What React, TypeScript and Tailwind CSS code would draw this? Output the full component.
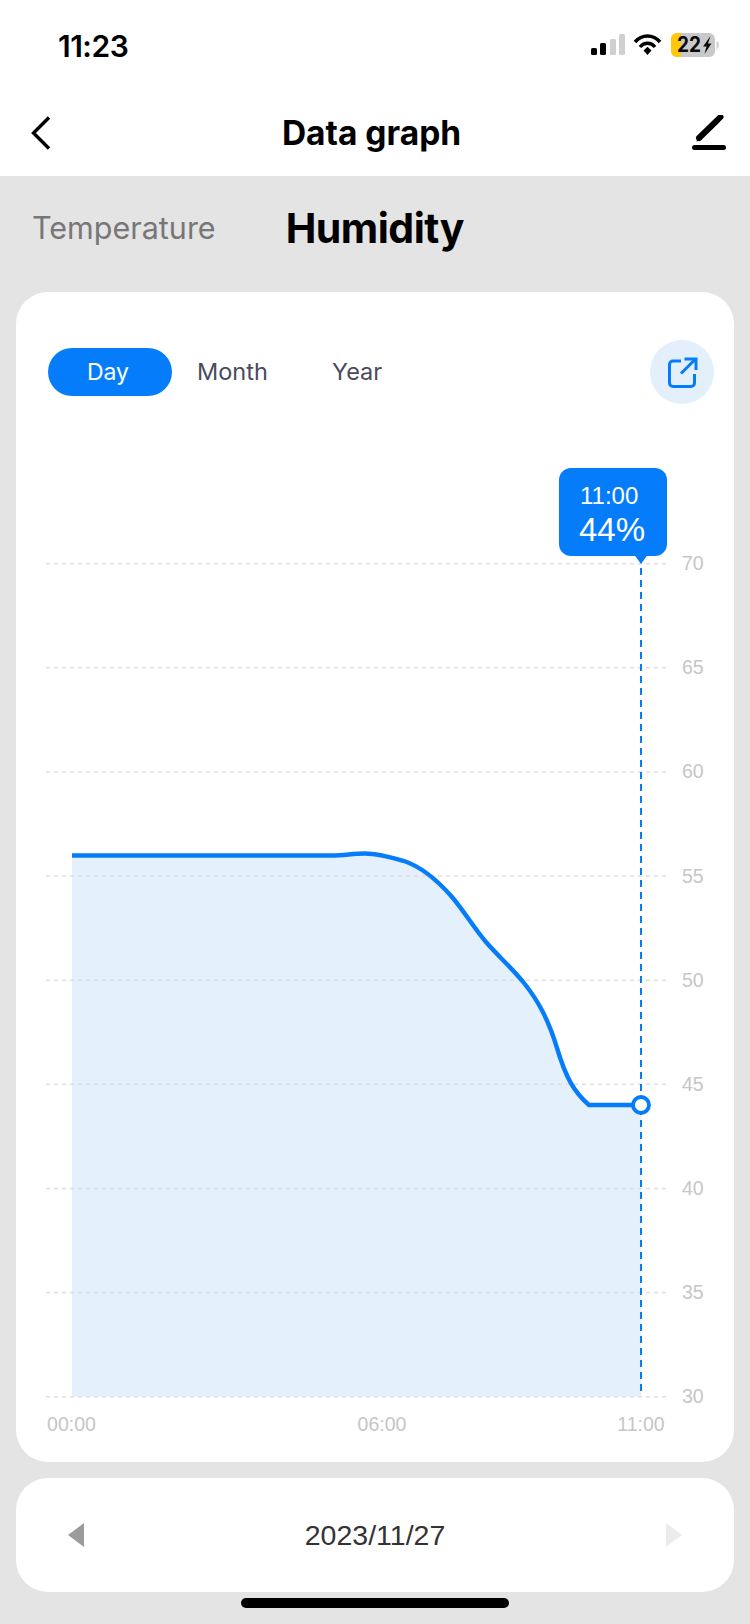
const BLUE = "#057dfa";
const levels = [70, 65, 60, 55, 50, 45, 40, 35, 30];
const yOf = (v: number) => 563.7 + (70 - v) * 20.825;
const curve =
  "M72 855.5 L331 855.5 C345 855.5 352 853.5 365 853.5 C378 853.5 390 857 404 861 C422 867 438 881 452 897 C464 911 474 928 486 942 C498 956 512 968 524 983 C540 1003 549 1022 557 1048 C566 1078 574 1092 589 1105 L641 1105";

function StatusBar() {
  return (
    <div className="h-[88px] flex items-start justify-between pt-[28px] pl-[58px] pr-[30px]">
      <span className="text-[30px] leading-[36px] font-semibold text-black tracking-[-0.5px]">11:23</span>
      <svg width="130" height="30" viewBox="590 31 130 30" className="mt-[3px]">
        <rect x="591" y="48" width="6" height="7" rx="1.5" fill="#000" />
        <rect x="600" y="43" width="6" height="12" rx="1.5" fill="#000" />
        <rect x="610" y="39" width="6" height="16" rx="1.5" fill="#cfcfcf" />
        <rect x="619" y="34" width="6" height="21" rx="1.5" fill="#cfcfcf" />
        <path d="M635 42 C642 34 653 34 660 42" fill="none" stroke="#000" strokeWidth="3.6" />
        <path d="M640 47 C644 42 651 42 655 47" fill="none" stroke="#000" strokeWidth="3.4" />
        <path d="M643.5 50.5 L647.5 46.8 L651.5 50.5 L647.5 55 Z" fill="#000" />
        <rect x="671" y="33" width="44" height="24" rx="6" fill="#c9c9c9" />
        <path d="M677 33 H681 V57 H677 A6 6 0 0 1 671 51 V39 A6 6 0 0 1 677 33 Z" fill="#ffc90a" />
        <path d="M716.5 41 C718.5 42 719 43.5 719 45 C719 46.5 718.5 48 716.5 49 Z" fill="#d4d4d4" />
        <text x="677" y="52" fontFamily="Inter, sans-serif" fontWeight="700" fontSize="21" textLength="24" lengthAdjust="spacingAndGlyphs" fill="#0a0a0a">22</text>
        <path d="M710.5 36 L703 46.5 H706.5 L704.5 54 L711.5 43.5 H708 Z" fill="#0a0a0a" />
      </svg>
    </div>
  );
}

function NavBar() {
  return (
    <div className="h-[88px] flex items-center justify-between pl-[31px] pr-[24px] pt-[2px]">
      <svg width="20" height="34" viewBox="0 0 20 34" fill="none">
        <path d="M18 1.5 L2.5 17 L18 32.5" stroke="#000" strokeWidth="3.4" />
      </svg>
      <span className="text-[33.5px] leading-[40px] font-bold text-black">Data graph</span>
      <svg width="34" height="36" viewBox="692 114 34 36">
        <path d="M699 137 L717 119.5" stroke="#000" strokeWidth="6" strokeLinecap="round" />
        <path d="M696.5 140.5 L698 134.5 L702 138.5 Z" fill="#000" />
        <path d="M718.5 118 L720.5 116" stroke="#000" strokeWidth="6" strokeLinecap="round" />
        <rect x="692" y="144" width="34" height="5" rx="2.5" fill="#000" />
      </svg>
    </div>
  );
}

function Tabs() {
  return (
    <div className="h-[116px] flex items-center pl-[32px] gap-[70px] pb-[12px]">
      <span className="text-[30.5px] leading-[40px] text-[#777777]">Temperature</span>
      <span className="text-[41px] leading-[50px] font-bold text-black tracking-[-0.5px]">Humidity</span>
    </div>
  );
}

function RangeRow() {
  return (
    <div className="h-[64px] flex items-center pl-[32px] pr-[20px]">
      <div className="w-[124px] h-[48px] rounded-full flex items-center justify-center text-white text-[23px] bg-[#057dfa] pr-[4px]">Day</div>
      <span className="ml-[25px] w-[135px] text-[23.5px] text-[#4a4a5c]">Month</span>
      <span className="text-[23.5px] text-[#4a4a5c]">Year</span>
      <div className="ml-auto w-[64px] h-[64px] rounded-full bg-[#e3effb] flex items-center justify-center pl-[2px]">
        <svg width="30" height="31" viewBox="0 0 30 31" fill="none" stroke={BLUE} strokeWidth="3">
          <path d="M13 4 H5 A3.5 3.5 0 0 0 1.5 7.5 V26 A3.5 3.5 0 0 0 5 29.5 H23 A3.5 3.5 0 0 0 26.5 26 V17" />
          <path d="M13 16.5 L27 2.5" />
          <path d="M16.5 2 H28 V13" />
        </svg>
      </div>
    </div>
  );
}

function Chart() {
  return (
    <div className="relative h-[1058px]">
      <svg width="718" height="1058" viewBox="16 404 718 1058" className="block">
        <path d={`${curve} L641 1396.7 L72 1396.7 Z`} fill="#e4f0fc" />
        {levels.map((v) => (
          <g key={v}>
            <line x1="46" x2="666" y1={yOf(v)} y2={yOf(v)} stroke="#dedede" strokeWidth="1.5" strokeDasharray="4 4" />
            <text x="682" y={yOf(v) + 6.5} fontFamily="'Liberation Sans', sans-serif" fontSize="19.5" fill="#c6c6c6">{v}</text>
          </g>
        ))}
        <line x1="641" x2="641" y1="556" y2="1396" stroke={BLUE} strokeWidth="2" strokeDasharray="7 5" />
        <path d={curve} fill="none" stroke={BLUE} strokeWidth="4.4" />
        <circle cx="641" cy="1105" r="8" fill="#fff" stroke={BLUE} strokeWidth="3.8" />
        <path d="M634.5 555 H647.5 L641 564 Z" fill={BLUE} />
        {[["00:00", 71.5], ["06:00", 382], ["11:00", 641]].map(([t, x]) => (
          <text key={t as string} x={x as number} y="1431" textAnchor="middle" fontFamily="'Liberation Sans', sans-serif" fontSize="19.5" fill="#c6c6c6">{t}</text>
        ))}
      </svg>
      <div className="absolute left-[543px] top-[64px] w-[108px] h-[88px] rounded-[12px] bg-[#057dfa] text-white pl-[21px] pt-[13px] font-['Liberation_Sans',sans-serif]">
        <div className="text-[24px] leading-[30px]">11:00</div>
        <div className="text-[33px] leading-[37px] -ml-[1px]">44%</div>
      </div>
    </div>
  );
}

function DateBar() {
  return (
    <div className="mx-[16px] mt-[16px] h-[114px] rounded-[32px] bg-white flex items-center justify-between pl-[52px] pr-[52px]">
      <svg width="16" height="24" viewBox="0 0 16 24"><path d="M16 0 V24 L0 12 Z" fill="#9b9b9b" /></svg>
      <span className="text-[28.5px] text-[#333333] font-['Liberation_Sans',sans-serif]">2023/11/27</span>
      <svg width="16" height="24" viewBox="0 0 16 24"><path d="M0 0 V24 L16 12 Z" fill="#ececec" /></svg>
    </div>
  );
}

export default function App() {
  return (
    <div className="w-[750px] h-[1624px] bg-[#e4e4e4] overflow-hidden font-['Inter',sans-serif]">
      <div className="bg-white h-[176px]">
        <StatusBar />
        <NavBar />
      </div>
      <Tabs />
      <div className="mx-[16px] h-[1170px] rounded-[32px] bg-white pt-[48px]">
        <RangeRow />
        <Chart />
      </div>
      <DateBar />
      <div className="mx-auto mt-[6px] w-[268px] h-[10px] rounded-full bg-black" />
    </div>
  );
}
